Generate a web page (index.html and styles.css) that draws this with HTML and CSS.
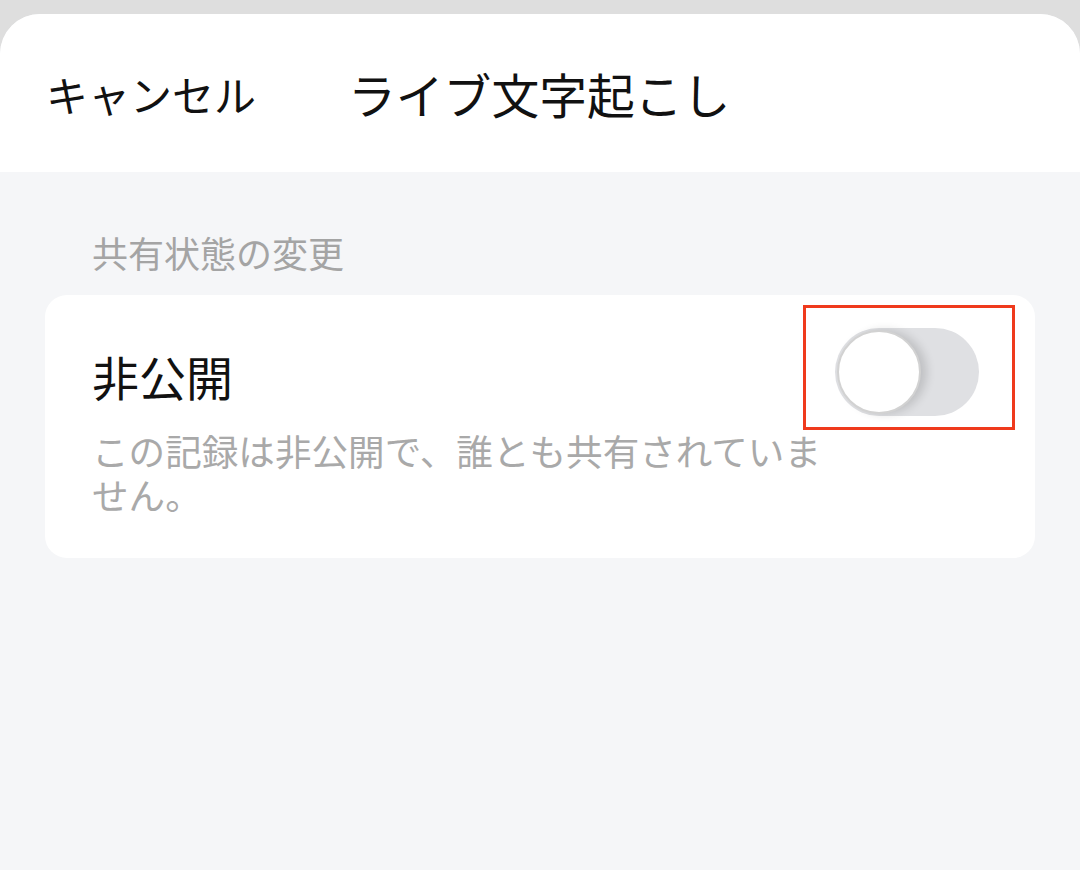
FILE: index.html
```html
<!DOCTYPE html>
<html lang="ja">

<head>
    <meta charset="UTF-8" />
    <meta name="viewport" content="width=device-width, initial-scale=1" />
    <link rel="stylesheet" href="styles.css">
</head>

<body>
    <section class="sheet">
        <header class="top-bar">
            <span class="cancel">キャンセル</span>
            <span class="title">ライブ文字起こし</span>
        </header>
        <div class="content">
            <div class="group-label">共有状態の変更</div>
            <div class="card">
                <div class="card-row">
                    <div class="card-title">非公開</div>
                    <div class="toggle">
                        <div class="knob"></div>
                    </div>
                </div>
                <p class="card-desc">この記録は非公開で、誰とも共有されていません。</p>
            </div>
        </div>
    </section>
</body>

</html>
```
FILE: styles.css
```css
body {
    margin: 0;
    padding: 0;
    height: 100vh;
    background-color: #dedede;
    font-family: "Noto Sans CJK JP", "Noto Sans", sans-serif;
    overflow: hidden;
}

.sheet {
    margin-top: 14px;
    height: calc(100vh - 14px);
    background-color: #f5f6f8;
    border-radius: 40px 40px 0 0;
    overflow: hidden;
}

.top-bar {
    display: flex;
    align-items: center;
    height: 158px;
    padding-left: 46px;
    background-color: #fff;
    color: #111;
}

.cancel {
    font-size: 42px;
    margin-right: 92px;
}

.title {
    font-size: 47.8px;
}

.content {
    padding: 55px 45px 0 45px;
}

.group-label {
    font-size: 36px;
    line-height: 50px;
    color: #a4a4a4;
    padding-left: 47px;
    margin-bottom: 18px;
}

.card {
    background-color: #fff;
    border-radius: 22px;
    padding: 47px 56px 41px 47px;
}

.card-row {
    display: flex;
    align-items: center;
    justify-content: space-between;
    height: 68px;
}

.card-title {
    font-size: 47px;
    line-height: 68px;
    color: #111;
}

.toggle {
    position: relative;
    width: 144px;
    height: 88px;
    margin-bottom: 8px;
    border-radius: 44px;
    background-color: #dfe0e3;
}

/* red annotation frame around the switch */
.toggle::after {
    content: "";
    position: absolute;
    left: -32px;
    top: -23px;
    right: -36px;
    bottom: -14px;
    border: 3px solid #ef3a1d;
}

.knob {
    position: absolute;
    left: 2px;
    top: 2px;
    width: 80px;
    height: 80px;
    border-radius: 50%;
    background-color: #fff;
    border: 2px solid #d2d2d2;
    box-shadow: 6px 0 10px rgba(0, 0, 0, 0.14);
}

.card-desc {
    margin: 19px 0 0 0;
    max-width: 745px;
    font-size: 36.6px;
    line-height: 44px;
    color: #a9a9a9;
}
```
